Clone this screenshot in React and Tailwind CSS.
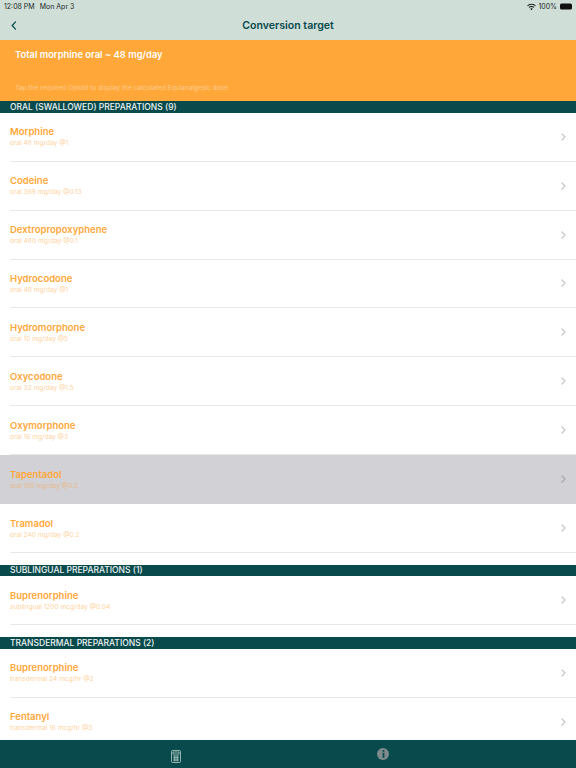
import React from "react";

const Row = ({ name, sub, active, last }) => (
  <div className={`h-[48.95px] shrink-0 flex ${active ? "bg-[#d1d1d6]" : "bg-white"}`}>
    <div className={`flex-1 ml-[10px] flex items-center justify-between border-b ${active || last ? "border-transparent" : "border-[#e8e8e8]"}`}>
      <div className="flex flex-col mt-[1px]">
        <span className="text-[9.5px] leading-[12px] font-semibold text-[#ffa739]">{name}</span>
        <span className="text-[6.6px] leading-[10px] text-[#ffa739] opacity-50">{sub}</span>
      </div>
      <svg width="5" height="8" viewBox="0 0 5 8" className="mr-[10px]" fill="none" stroke={active ? "#a8a8ad" : "#c7c7cc"} strokeWidth="1.3" strokeLinecap="round" strokeLinejoin="round">
        <path d="M1 1l3 3-3 3" />
      </svg>
    </div>
  </div>
);

const Head = ({ children }) => (
  <div className="h-[11.7px] shrink-0 bg-[#094a4d] pl-[10px] flex items-center text-[8.5px] font-medium leading-none text-[#eef4f2]">
    {children}
  </div>
);

const oral = [
  ["Morphine", "oral 48 mg/day @1"],
  ["Codeine", "oral 369 mg/day @0.13"],
  ["Dextropropoxyphene", "oral 480 mg/day @0.1"],
  ["Hydrocodone", "oral 48 mg/day @1"],
  ["Hydromorphone", "oral 10 mg/day @5"],
  ["Oxycodone", "oral 32 mg/day @1.5"],
  ["Oxymorphone", "oral 16 mg/day @3"],
  ["Tapentadol", "oral 160 mg/day @0.3"],
  ["Tramadol", "oral 240 mg/day @0.2"],
];

export default function App() {
  return (
    <div className="w-[576px] h-[768px] overflow-hidden flex flex-col bg-white font-['Inter',sans-serif]">
      <div className="h-[40px] shrink-0 bg-[#cfded7] flex flex-col">
        <div className="h-[12px] mt-[0px] pl-[4px] pr-[4px] flex items-center justify-between text-[7px] text-[#1a2a2a] translate-y-[0.5px]">
          <div className="flex gap-[5px]">
            <span>12:08 PM</span>
            <span>Mon Apr 3</span>
          </div>
          <div className="flex items-center gap-[2px]">
            <svg width="9" height="7" viewBox="0 0 18 14" fill="#111">
              <path d="M9 2.6c2.8 0 5.300 1.100 7.200 2.900l1.300-1.400C15.300 2 12.300.7 9 .7S2.700 2 .5 4.100l1.300 1.400C3.700 3.700 6.200 2.600 9 2.600zM9 6.900c1.600 0 3.100.6 4.200 1.700l1.400-1.400C13.100 5.800 11.100 5 9 5s-4.100.8-5.600 2.200l1.400 1.400C5.900 7.500 7.400 6.900 9 6.900zM9 9.300c-1 0-1.900.4-2.600 1L9 13.300l2.600-3c-.7-.6-1.600-1-2.600-1z" />
            </svg>
            <span>100%</span>
            <div className="w-[12px] h-[6px] ml-[1px] rounded-[1.5px] bg-[#111]" />
          </div>
        </div>
        <div className="flex-1 relative flex items-center justify-center">
          <svg width="6" height="9" viewBox="0 0 6 9" className="absolute left-[11px] top-[9px]" fill="none" stroke="#094a4d" strokeWidth="1.2" strokeLinecap="round" strokeLinejoin="round">
            <path d="M4.500 0.800L1.200 4.500l3.300 3.700" />
          </svg>
          <span className="text-[10.6px] font-semibold text-[#094a4d]">Conversion target</span>
        </div>
      </div>

      <div className="h-[61px] shrink-0 bg-[#ffa739] pl-[15px] flex flex-col">
        <span className="text-[9.4px] leading-[12px] font-semibold text-[#fff] mt-[9px]">Total morphine oral ~ 48 mg/day</span>
        <span className="text-[6.6px] leading-[9px] text-white opacity-40 mt-[23px]">Tap the required Opioid to display the calculated Equianalgesic dose</span>
      </div>

      <div className="flex-1 flex flex-col min-h-0 overflow-hidden">
        <Head>ORAL (SWALLOWED) PREPARATIONS (9)</Head>
        {oral.map(([n, s]) => (
          <Row key={n} name={n} sub={s} active={n === "Tapentadol"} />
        ))}
        <div className="h-[11.6px] shrink-0" />
        <Head>SUBLINGUAL PREPARATIONS (1)</Head>
        <Row name="Buprenorphine" sub="sublingual 1200 mcg/day @0.04" />
        <div className="h-[11.6px] shrink-0" />
        <Head>TRANSDERMAL PREPARATIONS (2)</Head>
        <Row name="Buprenorphine" sub="transdermal 24 mcg/hr @2" />
        <Row name="Fentanyl" sub="transdermal 16 mcg/hr @3" last />
      </div>

      <div className="h-[28.5px] shrink-0 bg-[#094a4d] flex relative">
        <div className="w-[288px] flex justify-center pl-[64px] pt-[10px]">
          <svg width="10" height="13" viewBox="0 0 10 13" fill="none" stroke="#b5cdc8" strokeWidth="0.8">
            <rect x="0.5" y="0.5" width="9" height="12" rx="1" />
            <rect x="2" y="2" width="6" height="2" />
            <path d="M2 5.800h6M2 7.500h6M2 9.200h6M2 10.800h6M3.500 5.500v5.500M5 5.500v5.500M6.500 5.500v5.500" strokeWidth="0.6" />
          </svg>
        </div>
        <div className="absolute left-[377px] top-[8px] w-[12px] h-[12px] rounded-full bg-[#7e8a8c] flex items-center justify-center">
          <svg width="3" height="8" viewBox="0 0 3 8" fill="#094a4d">
            <rect x="0.6" y="0" width="1.800" height="1.700" />
            <rect x="0.6" y="2.800" width="1.800" height="5" />
          </svg>
        </div>
      </div>
    </div>
  );
}
